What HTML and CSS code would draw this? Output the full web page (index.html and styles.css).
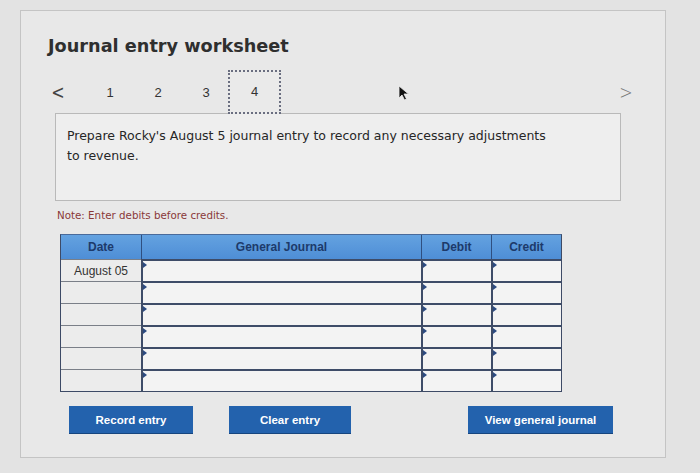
FILE: index.html
```html
<!DOCTYPE html>
<html>
<head>
<meta charset="utf-8">
<link rel="stylesheet" href="styles.css">
</head>
<body>
<div class="panel">
  <h1 class="title">Journal entry worksheet</h1>
  <div class="nav">
    <span class="chev">&lt;</span>
    <span class="step first">1</span>
    <span class="step">2</span>
    <span class="step">3</span>
    <span class="step current">4</span>
    <span class="spacer"></span>
    <span class="chev next">&gt;</span>
  </div>
  <div class="prompt">
    <p>Prepare Rocky's August 5 journal entry to record any necessary adjustments<br>to revenue.</p>
  </div>
  <p class="note">Note: Enter debits before credits.</p>
  <div class="journal">
    <div class="hd">Date</div><div class="hd">General Journal</div><div class="hd">Debit</div><div class="hd">Credit</div>
    <div class="date">August 05</div><div class="cell"></div><div class="cell"></div><div class="cell"></div>
    <div class="date"></div><div class="cell"></div><div class="cell"></div><div class="cell"></div>
    <div class="date"></div><div class="cell"></div><div class="cell"></div><div class="cell"></div>
    <div class="date"></div><div class="cell"></div><div class="cell"></div><div class="cell"></div>
    <div class="date"></div><div class="cell"></div><div class="cell"></div><div class="cell"></div>
    <div class="date"></div><div class="cell"></div><div class="cell"></div><div class="cell"></div>
  </div>
  <div class="actions">
    <button class="btn record">Record entry</button>
    <button class="btn clear">Clear entry</button>
    <span class="spacer"></span>
    <button class="btn view">View general journal</button>
  </div>
  <svg class="cursor" width="12" height="16" viewBox="0 0 12 16"><path d="M1 1 L1 13 L4 10 L6.5 15 L8.5 14 L6 9 L10.5 9 Z" fill="#111" stroke="#eee" stroke-width="0.8"/></svg>
</div>
</body>
</html>
```
FILE: styles.css
```css
html, body { margin: 0; padding: 0; }
body {
  background: #e3e3e3;
  width: 700px;
  height: 473px;
  overflow: hidden;
  font-family: "DejaVu Sans", Verdana, sans-serif;
}
.panel {
  position: relative;
  box-sizing: border-box;
  margin: 10px 0 0 20px;
  width: 646px;
  height: 448px;
  border: 1px solid #c4c4c4;
  background: #e8e8e8;
  padding: 22px 0 0 27px;
}
.title {
  margin: 0;
  font-size: 17.7px;
  line-height: 26px;
  font-weight: bold;
  color: #2f2f2f;
}
.nav {
  display: flex;
  align-items: center;
  height: 44px;
  margin-top: 11px;
  width: 590px;
  color: #333;
}
.chev {
  width: 20px;
  font-size: 20px;
  color: #444;
  text-align: center;
  transform: scaleX(0.8);
}
.chev.next { color: #777; font-weight: 300; margin-right: 2px; }
.step {
  width: 48px;
  text-align: center;
  font-family: "Liberation Sans", Arial, sans-serif;
  font-size: 13px;
}
.step.first { margin-left: 18px; }
.step.current {
  box-sizing: border-box;
  width: 53px;
  height: 44px;
  margin-left: -2px;
  line-height: 40px;
  border: 2px dotted #6a6e80;
  background: #eaeaea;
}
.spacer { flex: 1; }
.prompt {
  box-sizing: border-box;
  margin: -1px 0 0 7px;
  width: 566px;
  height: 88px;
  border: 1px solid #b9b9b9;
  background: #eeeeee;
  padding: 12px 11px;
}
.prompt p {
  margin: 0;
  font-size: 12.5px;
  line-height: 20px;
  color: #262626;
}
.note {
  margin: 7px 0 0 9px;
  font-size: 10.3px;
  line-height: 14px;
  color: #8a3838;
}
.journal {
  display: grid;
  grid-template-columns: 80px 280px 70px 70px;
  grid-auto-rows: 22px;
  grid-template-rows: 24px;
  width: 500px;
  margin: 12px 0 0 12px;
  border: 1px solid #3d4a66;
  border-top-color: #4a6a9a;
  font-family: "Liberation Sans", Arial, sans-serif;
}
.hd {
  background: linear-gradient(#64a2e0, #4e8ed6);
  color: #1d3a6a;
  font-weight: bold;
  font-size: 12px;
  display: flex;
  align-items: center;
  justify-content: center;
  border-left: 1px solid #2f4f80;
}
.hd:first-child { border-left: none; }
.date {
  box-sizing: border-box;
  background: #ececec;
  border-top: 1px solid #7a7f88;
  color: #333;
  font-size: 12px;
  display: flex;
  align-items: center;
  justify-content: center;
}
.cell {
  position: relative;
  box-sizing: border-box;
  background: #f3f3f3;
  border-top: 2px solid #3e4c68;
  border-left: 2px solid #3e4c68;
}
.cell::before {
  content: "";
  position: absolute;
  left: 0;
  top: 1px;
  border-left: 4px solid #2c4a80;
  border-top: 3px solid transparent;
  border-bottom: 3px solid transparent;
}
.actions {
  display: flex;
  align-items: center;
  width: 544px;
  margin: 14px 0 0 21px;
}
.btn {
  height: 28px;
  border: none;
  border-bottom: 1px solid #16457e;
  background: #2362ad;
  color: #fff;
  font-family: "Liberation Sans", Arial, sans-serif;
  font-weight: bold;
  font-size: 11.5px;
  padding: 0;
}
.record { width: 124px; }
.clear { width: 122px; margin-left: 36px; }
.view { width: 145px; }
.cursor {
  position: absolute;
  left: 377px;
  top: 74px;
}
```
